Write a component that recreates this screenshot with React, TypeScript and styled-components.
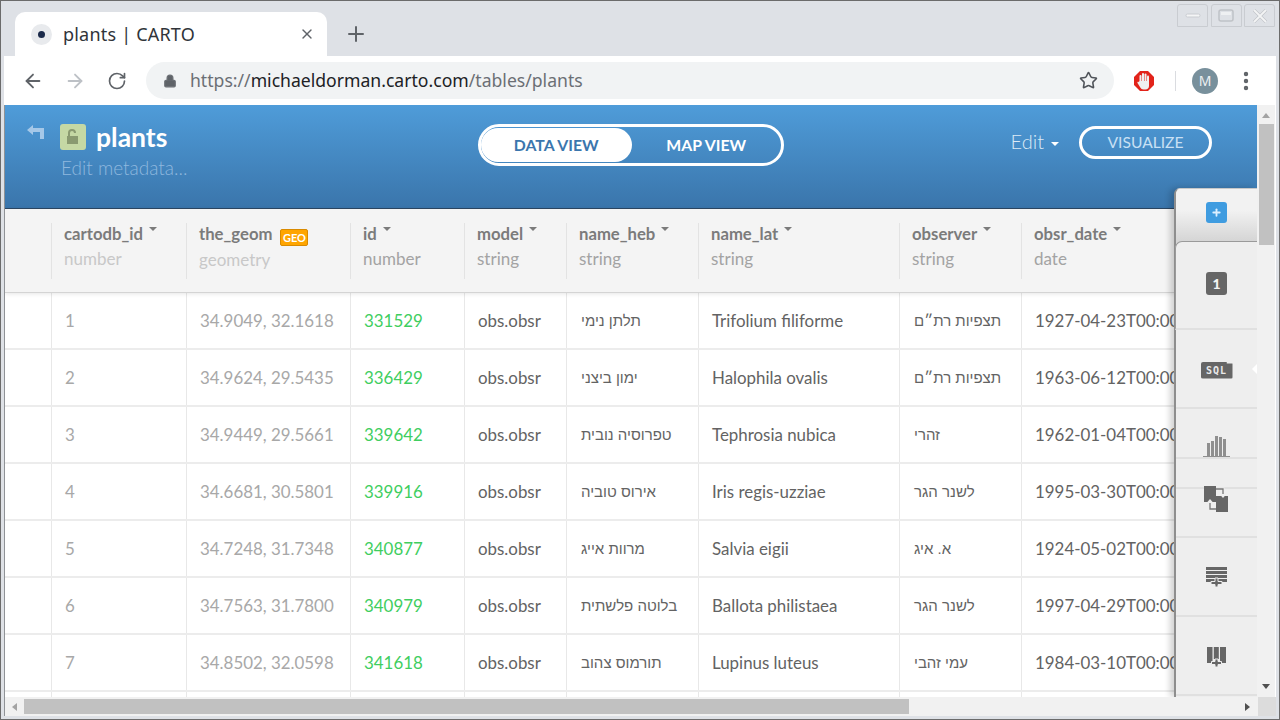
import React from 'react'
import styled, { createGlobalStyle } from 'styled-components'
import { ArrowLeft, ArrowRight, RotateCw, Lock, Star, EllipsisVertical, Plus, X } from 'lucide-react'

const Global = createGlobalStyle`
  html, body { margin: 0; padding: 0; height: 100%; overflow: hidden; background: #fff; }
  * { box-sizing: border-box; }
`

const COLUMNS = [
  { key: 'rowhead', width: 47 },
  { key: 'cartodb_id', width: 135, type: 'number', faint: true },
  { key: 'the_geom', width: 164, type: 'geometry', faint: true, geo: true },
  { key: 'id', width: 114, type: 'number' },
  { key: 'model', width: 102, type: 'string' },
  { key: 'name_heb', width: 132, type: 'string' },
  { key: 'name_lat', width: 201, type: 'string' },
  { key: 'observer', width: 122, type: 'string' },
  { key: 'obsr_date', width: 200, type: 'date' },
]

// the date column runs on under the side panel, only its visible part is kept
const ROWS = [
  ['1', '34.9049, 32.1618', '331529', 'obs.obsr', 'תלתן נימי', 'Trifolium filiforme', 'תצפיות רת״ם', '1927-04-23T00:00'],
  ['2', '34.9624, 29.5435', '336429', 'obs.obsr', 'ימון ביצני', 'Halophila ovalis', 'תצפיות רת״ם', '1963-06-12T00:00'],
  ['3', '34.9449, 29.5661', '339642', 'obs.obsr', 'טפרוסיה נובית', 'Tephrosia nubica', 'זהרי', '1962-01-04T00:00'],
  ['4', '34.6681, 30.5801', '339916', 'obs.obsr', 'אירוס טוביה', 'Iris regis-uzziae', 'לשנר הגר', '1995-03-30T00:00'],
  ['5', '34.7248, 31.7348', '340877', 'obs.obsr', 'מרוות אייג', 'Salvia eigii', 'א. איג', '1924-05-02T00:00'],
  ['6', '34.7563, 31.7800', '340979', 'obs.obsr', 'בלוטה פלשתית', 'Ballota philistaea', 'לשנר הגר', '1997-04-29T00:00'],
  ['7', '34.8502, 32.0598', '341618', 'obs.obsr', 'תורמוס צהוב', 'Lupinus luteus', 'עמי זהבי', '1984-03-10T00:00'],
  ['', '', '', '', '', '', '', ''],
]

const Window = styled.div`
  width: 1280px;
  height: 720px;
  display: flex;
  flex-direction: column;
  overflow: hidden;
  background: #dee1e6;
  border: 1px solid #6b6b6b;
  font-family: Lato, sans-serif;
`
const TabStrip = styled.div`
  height: 55px;
  flex: none;
  display: flex;
  align-items: flex-end;
  padding-left: 14px;
  position: relative;
`
const Tab = styled.div`
  width: 312px;
  height: 44px;
  background: #fff;
  border-radius: 10px 10px 0 0;
  display: flex;
  align-items: center;
  padding: 0 12px 0 16px;
  font: 18px/24px 'Noto Sans', sans-serif;
`
const Favicon = styled.span`
  width: 21px;
  height: 21px;
  border-radius: 50%;
  background: #e8eaed;
  display: flex;
  align-items: center;
  justify-content: center;
  margin-right: 11px;
  &::after {
    content: '';
    width: 7px;
    height: 7px;
    border-radius: 50%;
    background: #1b2a4a;
  }
`
const TabTitle = styled.span`
  flex: 1;
  color: #303439;
  letter-spacing: 0.2px;
`
const NewTab = styled.span`
  margin: 0 0 10px 17px;
  height: 24px;
  color: #5f6368;
  display: flex;
`
const WindowButtons = styled.div`
  position: absolute;
  top: 3px;
  right: 4px;
  display: flex;
  gap: 2.5px;
`
const WindowButton = styled.span`
  width: 31px;
  height: 23px;
  border: 1px solid #c9ccd1;
  border-radius: 3px 3px 0 0;
  display: flex;
  align-items: center;
  justify-content: center;
`
const Toolbar = styled.div`
  height: 49px;
  flex: none;
  margin: 0 3px;
  background: #fff;
  display: flex;
  align-items: center;
  padding-left: 17px;
  color: #5f6368;
`
const NavButton = styled.span<{ $off?: boolean }>`
  width: 24px;
  height: 24px;
  margin-right: 18px;
  color: ${p => (p.$off ? '#bdc1c6' : '#5f6368')};
  display: flex;
  align-items: center;
  justify-content: center;
`
const Omnibox = styled.div`
  width: 968px;
  height: 37px;
  margin-left: -1px;
  border-radius: 19px;
  background: #f1f3f4;
  display: flex;
  align-items: center;
  padding: 0 16px 0 17px;
  font: 17.6px/24px 'Noto Sans', sans-serif;
  color: #6b6f74;
`
const Url = styled.span`
  flex: 1;
  margin-left: 13px;
  padding-bottom: 2px;
  white-space: nowrap;
  b { font-weight: 400; color: #202124; }
`
const ToolbarRight = styled.div`
  flex: 1;
  display: flex;
  align-items: center;
`
const AdBlock = styled.svg`
  margin-left: 19px;
  width: 22px;
  height: 22px;
`
const Divider = styled.span`
  width: 1px;
  height: 20px;
  background: #dadce0;
  margin-left: 20px;
`
const Avatar = styled.span`
  width: 26px;
  height: 26px;
  border-radius: 50%;
  background: #78909c;
  color: #eceff1;
  margin-left: 16px;
  display: flex;
  align-items: center;
  justify-content: center;
  font: 14px 'Noto Sans', sans-serif;
`
const Kebab = styled.span`
  margin-left: 16px;
  display: flex;
  color: #5f6368;
`
const Viewport = styled.div`
  flex: 1;
  min-height: 0;
  margin: 0 3px 3px;
  background: #fff;
  display: flex;
  flex-direction: column;
  border-left: 1px solid #8f9296;
`
const ViewportRow = styled.div`
  flex: 1;
  min-height: 0;
  display: flex;
`
const Content = styled.div`
  width: 1252px;
  flex: none;
  position: relative;
  overflow: hidden;
  display: flex;
  flex-direction: column;
`
const Header = styled.header`
  height: 104px;
  flex: none;
  background: linear-gradient(#4f9cd9, #3a75ab);
  border-bottom: 1px solid #2d4763;
  display: grid;
  grid-template-columns: 1fr auto 1fr;
  padding: 19px 45px 0 21px;
  color: #fff;
`
const TitleBlock = styled.div`
  display: flex;
  gap: 14px;
`
const BackIcon = styled.svg`
  width: 20px;
  height: 20px;
  margin-right: -1px;
  flex: none;
`
const LockBadge = styled.span`
  width: 26px;
  height: 26px;
  border-radius: 3px;
  background: #c5d8a4;
  display: flex;
  align-items: center;
  justify-content: center;
  margin: 0 -4px 0 1px;
  flex: none;
`
const TableName = styled.div`
  font-size: 26.5px;
  line-height: 28px;
  font-weight: 700;
  margin-top: -1px;
`
const Meta = styled.div`
  font-size: 19px;
  font-weight: 300;
  line-height: 24px;
  margin: 5px 0 0 -35px;
  color: #8fb8de;
  white-space: nowrap;
`
const ViewSwitch = styled.div`
  width: 306px;
  height: 42px;
  margin-left: 24px;
  border: 3px solid #fff;
  border-radius: 21px;
  display: flex;
`
const ViewOption = styled.span<{ $active?: boolean }>`
  width: ${p => (p.$active ? 151 : 150)}px;
  height: 34px;
  margin-top: 1px;
  padding-bottom: 2px;
  border-radius: 17px;
  background: ${p => (p.$active ? '#fff' : 'transparent')};
  color: ${p => (p.$active ? '#3b76ad' : '#fff')};
  display: flex;
  align-items: center;
  justify-content: center;
  font-size: 15.8px;
  font-weight: 700;
`
const HeaderActions = styled.div`
  display: flex;
  justify-content: flex-end;
  align-items: flex-start;
  padding-top: 2px;
`
const EditLink = styled.span`
  font-size: 20px;
  font-weight: 300;
  line-height: 31px;
  color: #dceaf6;
  display: flex;
  align-items: center;
  gap: 7px;
  margin-right: 20px;
  &::after {
    content: '';
    margin-top: 5px;
    border: 4px solid transparent;
    border-top-color: #fff;
    border-bottom-width: 0;
  }
`
const VisualizeButton = styled.span`
  width: 133px;
  height: 33px;
  padding-bottom: 2px;
  border: 3px solid #fff;
  border-radius: 17px;
  display: flex;
  align-items: center;
  justify-content: center;
  font-size: 15.6px;
  color: #c9e0f4;
`
const TableHead = styled.div`
  height: 84px;
  flex: none;
  background: #f4f4f4;
  border-bottom: 1px solid #d4d4d4;
  box-shadow: 0 1px 4px rgba(0, 0, 0, 0.1);
  display: flex;
  position: relative;
  padding-top: 14px;
`
const HeadCell = styled.div<{ $w: number }>`
  width: ${p => p.$w}px;
  height: 56px;
  flex: none;
  border-right: 1px solid #e3e3e3;
  padding-left: 12px;
`
const ColName = styled.div`
  display: flex;
  align-items: flex-start;
  font-size: 16.7px;
  font-weight: 700;
  line-height: 22px;
  color: #7b7b7b;
`
const SortCaret = styled.span`
  margin: 4px 0 0 6px;
  border: 4px solid transparent;
  border-top-color: #7b7b7b;
  border-bottom-width: 0;
`
const GeoTag = styled.span`
  margin: 6px 0 0 8px;
  width: 28px;
  height: 17px;
  border-radius: 2px;
  border: 1px solid #d98a00;
  background: #ffa500;
  color: #fff;
  font-size: 11px;
  font-weight: 700;
  line-height: 15px;
  text-align: center;
`
const ColType = styled.div<{ $faint?: boolean }>`
  margin-top: 3px;
  font-size: 17px;
  line-height: 22px;
  color: ${p => (p.$faint ? '#c8c8c8' : '#a3a3a3')};
`
const Row = styled.div`
  height: 57px;
  flex: none;
  display: flex;
  border-bottom: 2px solid #ececec;
`
const Cell = styled.div<{ $w: number; $tone?: string; $rtl?: boolean }>`
  width: ${p => p.$w}px;
  flex: none;
  border-right: 1px solid #e8e8e8;
  padding: 0 0 1px 13px;
  display: flex;
  align-items: center;
  white-space: nowrap;
  overflow: hidden;
  font-size: 16.9px;
  color: ${p => p.$tone || '#636363'};
  ${p => p.$rtl && `font-family: 'Liberation Sans', sans-serif; font-size: 15px; padding-left: 14px;`}
`
const SidePanel = styled.aside`
  position: absolute;
  top: 83px;
  right: 0;
  bottom: 0;
  width: 83px;
  border-left: 2px solid #8e8e8e;
  border-top: 1px solid #c8c8c8;
  border-radius: 6px 0 0 0;
  background: #eeeeee;
  box-shadow: -4px 0 6px rgba(0, 0, 0, 0.18);
  display: flex;
  flex-direction: column;
`
const AddTab = styled.div`
  height: 60px;
  margin-bottom: -8px;
  padding-bottom: 13px;
  flex: none;
  background: linear-gradient(#f2f2f2 35%, #d6d6d6 85%);
  border-radius: 5px 0 0 0;
  display: flex;
  align-items: center;
  justify-content: center;
`
const AddButton = styled.span`
  width: 21px;
  height: 21px;
  border-radius: 3px;
  background: #3f9ce0;
  color: #dcefff;
  display: flex;
  align-items: center;
  justify-content: center;
`
const Tool = styled.div<{ $h: number; $first?: boolean; $align?: string }>`
  height: ${p => p.$h}px;
  flex: none;
  position: relative;
  background: #eeeeee;
  border-bottom: 2px solid #e0e0e0;
  display: flex;
  align-items: ${p => p.$align || 'center'};
  justify-content: center;
  ${p => p.$first && `border-top: 1px solid #9a9a9a; border-left: 1px solid #9a9a9a; margin-left: -1px; border-radius: 7px 0 0 0; padding-bottom: 4px;`}
`
const CountBadge = styled.span`
  width: 21px;
  height: 23px;
  border-radius: 3px;
  background: #666;
  color: #f3f3f3;
  font-size: 14px;
  font-weight: 900;
  display: flex;
  align-items: center;
  justify-content: center;
`
const SqlBadge = styled.span`
  width: 32px;
  height: 17px;
  margin-top: 3px;
  border-radius: 2px;
  background: #666;
  color: #e9e9e9;
  font: 700 10px/17px 'DejaVu Sans Mono', monospace;
  letter-spacing: 1px;
  text-align: center;
  clip-path: polygon(0 0, 82% 0, 82% 12%, 100% 12%, 100% 100%, 0 100%);
`
const ActiveNotch = styled.span`
  position: absolute;
  right: 0;
  top: 34px;
  border: 5px solid transparent;
  border-right-color: #fff;
  border-left-width: 0;
`
const MergeIcon = styled.svg`
  width: 25px;
  height: 26px;
  margin-top: -3px;
  position: relative;
`
const ColumnIcon = styled.svg`
  width: 19px;
  height: 20px;
  margin-top: 3px;
`
const VScroll = styled.div`
  width: 18px;
  flex: none;
  background: #f1f1f1;
  display: flex;
  flex-direction: column;
  align-items: center;
`
const VThumb = styled.div`
  width: 15px;
  height: 121px;
  margin-top: 6px;
  background: #c1c1c1;
`
const ArrowUp = styled.span`
  margin-top: 8px;
  border: 4px solid transparent;
  border-bottom: 5px solid #a3a3a3;
  border-top-width: 0;
`
const ArrowDown = styled.span`
  margin-top: auto;
  margin-bottom: 8px;
  border: 4px solid transparent;
  border-top: 5px solid #505050;
  border-bottom-width: 0;
`
const HScroll = styled.div`
  height: 19px;
  flex: none;
  background: #f1f1f1;
  display: flex;
  align-items: center;
`
const ArrowLeftBtn = styled.span`
  margin-left: 7px;
  border: 4px solid transparent;
  border-right: 5px solid #a3a3a3;
  border-left-width: 0;
`
const HThumb = styled.div`
  width: 885px;
  height: 15px;
  margin-left: 7px;
  background: #c1c1c1;
`
const ArrowRightBtn = styled.span`
  margin-left: 336px;
  border: 4px solid transparent;
  border-left: 5px solid #505050;
  border-right-width: 0;
`
const Corner = styled.span`
  margin-left: auto;
  width: 18px;
  height: 19px;
  background: #dcdcdc;
`

const toneFor = (index: number) => {
  if (index <= 1) return '#a8a8a8'
  if (index === 2) return '#3fce5f'
  return undefined
}

export default function App() {
  return (
    <Window>
      <Global />
      <TabStrip>
        <Tab>
          <Favicon />
          <TabTitle>plants | CARTO</TabTitle>
          <X size={16} color="#5f6368" strokeWidth={2} />
        </Tab>
        <NewTab><Plus size={24} strokeWidth={2} /></NewTab>
        <WindowButtons>
          <WindowButton>
            <svg width="16" height="6"><rect x="1" y="1" width="14" height="3" rx="1.5" fill="#f4f5f6" stroke="#c9ccd1" /></svg>
          </WindowButton>
          <WindowButton>
            <svg width="16" height="14"><rect x="1" y="1" width="14" height="11" rx="2" fill="none" stroke="#bfc2c7" strokeWidth="1.5" /><rect x="3" y="3" width="10" height="3" fill="#eef0f2" /></svg>
          </WindowButton>
          <WindowButton>
            <svg width="16" height="14"><path d="M2 1l12 12M14 1L2 13" stroke="#c0c3c8" strokeWidth="3.2" /><path d="M2 1l12 12M14 1L2 13" stroke="#f3f4f5" strokeWidth="1.8" /></svg>
          </WindowButton>
        </WindowButtons>
      </TabStrip>
      <Toolbar>
        <NavButton><ArrowLeft size={22} strokeWidth={2} /></NavButton>
        <NavButton $off><ArrowRight size={22} strokeWidth={2} /></NavButton>
        <NavButton><RotateCw size={20} strokeWidth={2} /></NavButton>
        <Omnibox>
          <Lock size={14} fill="#5f6368" strokeWidth={2} />
          <Url>https://<b>michaeldorman.carto.com</b>/tables/plants</Url>
          <Star size={19} strokeWidth={2} color="#50545a" />
        </Omnibox>
        <ToolbarRight>
          <AdBlock viewBox="0 0 22 22">
            <path d="M7 1h8l6 6v8l-6 6H7l-6-6V7z" fill="#e2231a" />
            <rect x="6.500" y="5" width="2" height="9" rx="1" fill="#efefef" />
            <rect x="9" y="3" width="2" height="10" rx="1" fill="#efefef" />
            <rect x="11.500" y="3.500" width="2" height="10" rx="1" fill="#efefef" />
            <rect x="14" y="5.500" width="2" height="9" rx="1" fill="#efefef" />
            <path d="M6.500 11h9.500v5c0 2-1.500 3.500-3.500 3.500h-2c-1.500 0-2.500-.8-3.200-2L4.500 13c-.6-1 .8-1.800 1.500-.8z" fill="#efefef" />
          </AdBlock>
          <Divider />
          <Avatar>M</Avatar>
          <Kebab><EllipsisVertical size={24} strokeWidth={2.4} /></Kebab>
        </ToolbarRight>
      </Toolbar>
      <Viewport>
        <ViewportRow>
          <Content>
            <Header>
              <TitleBlock>
                <BackIcon viewBox="0 0 20 20">
                  <path d="M1 6l6-5v3h11v11h-4V8H7v3z" fill="#a5c8e8" />
                </BackIcon>
                <LockBadge>
                  <svg width="14" height="16" viewBox="0 0 14 16">
                    <path d="M2 7V4a4 4 0 0 1 8 0h-2a2 2 0 0 0-4 0v3h8v8H1V7z" fill="#8a9a70" />
                  </svg>
                </LockBadge>
                <div>
                  <TableName>plants</TableName>
                  <Meta>Edit metadata...</Meta>
                </div>
              </TitleBlock>
              <ViewSwitch>
                <ViewOption $active>DATA VIEW</ViewOption>
                <ViewOption>MAP VIEW</ViewOption>
              </ViewSwitch>
              <HeaderActions>
                <EditLink>Edit</EditLink>
                <VisualizeButton>VISUALIZE</VisualizeButton>
              </HeaderActions>
            </Header>
            <TableHead>
              {COLUMNS.map(col => (
                <HeadCell key={col.key} $w={col.width}>
                  {col.type && (
                    <>
                      <ColName>
                        {col.key}
                        {col.geo ? <GeoTag>GEO</GeoTag> : <SortCaret />}
                      </ColName>
                      <ColType $faint={col.faint}>{col.type}</ColType>
                    </>
                  )}
                </HeadCell>
              ))}
            </TableHead>
            {ROWS.map((row, n) => (
              <Row key={n}>
                <Cell $w={COLUMNS[0].width} />
                {row.map((value, i) => (
                  <Cell
                    key={i}
                    $w={COLUMNS[i + 1].width}
                    $tone={toneFor(i)}
                    $rtl={i === 4 || i === 6}
                  >
                    {value}
                  </Cell>
                ))}
              </Row>
            ))}
            <SidePanel>
              <AddTab>
                <AddButton><Plus size={11} strokeWidth={4} /></AddButton>
              </AddTab>
              <Tool $h={89} $first><CountBadge>1</CountBadge></Tool>
              <Tool $h={79}><SqlBadge>SQL</SqlBadge><ActiveNotch /></Tool>
              <Tool $h={50} $align="flex-end">
                <svg width="27" height="21" viewBox="0 0 27 21" fill="#8f8f8f">
                  <rect x="4" y="7" width="3" height="14" /><rect x="8" y="5" width="3" height="16" /><rect x="12" y="0" width="3" height="21" /><rect x="16" y="1" width="3" height="20" /><rect x="20" y="3" width="3" height="18" /><rect x="0" y="20" width="27" height="1" />
                </svg>
              </Tool>
              <Tool $h={30} />
              <Tool $h={49} $align="flex-start">
                <MergeIcon viewBox="0 0 25 26">
                  <rect x="0" y="0" width="12" height="16" fill="#666" />
                  <rect x="12" y="10" width="12" height="16" fill="#666" />
                  <path d="M12 3h7v5" fill="none" stroke="#eee" strokeWidth="3" />
                  <path d="M12 3h7v5" fill="none" stroke="#777" strokeWidth="1.3" />
                  <path d="M15.500 8h7L19 12z" fill="#eee" />
                  <path d="M12 23H6v-6" fill="none" stroke="#eee" strokeWidth="3" />
                  <path d="M12 23H6v-6" fill="none" stroke="#777" strokeWidth="1.3" />
                  <path d="M2.500 17h7L6 13z" fill="#eee" />
                </MergeIcon>
              </Tool>
              <Tool $h={79}>
                <svg width="22" height="20" viewBox="0 0 22 20" fill="#666">
                  <rect x="0" y="0" width="21" height="3" /><rect x="0" y="4" width="21" height="3" /><rect x="0" y="8" width="21" height="3" /><rect x="0" y="12" width="21" height="3" />
                  <path d="M9 11h3v3.500h4v3h-4V20H9v-2.500H5v-3h4z" stroke="#eee" strokeWidth="1" />
                </svg>
              </Tool>
              <Tool $h={79}>
                <ColumnIcon viewBox="0 0 19 20" fill="#666">
                  <rect x="0" y="0" width="5.500" height="16" /><rect x="6.800" y="0" width="5" height="12" /><rect x="13" y="0" width="6" height="16" />
                  <path d="M8 12h3v2.500h3.500v3H11V20H8v-2.500H4.500v-3H8z" stroke="#eee" strokeWidth="1" />
                </ColumnIcon>
              </Tool>
            </SidePanel>
          </Content>
          <VScroll>
            <ArrowUp />
            <VThumb />
            <ArrowDown />
          </VScroll>
        </ViewportRow>
        <HScroll>
          <ArrowLeftBtn />
          <HThumb />
          <ArrowRightBtn />
          <Corner />
        </HScroll>
      </Viewport>
    </Window>
  )
}
